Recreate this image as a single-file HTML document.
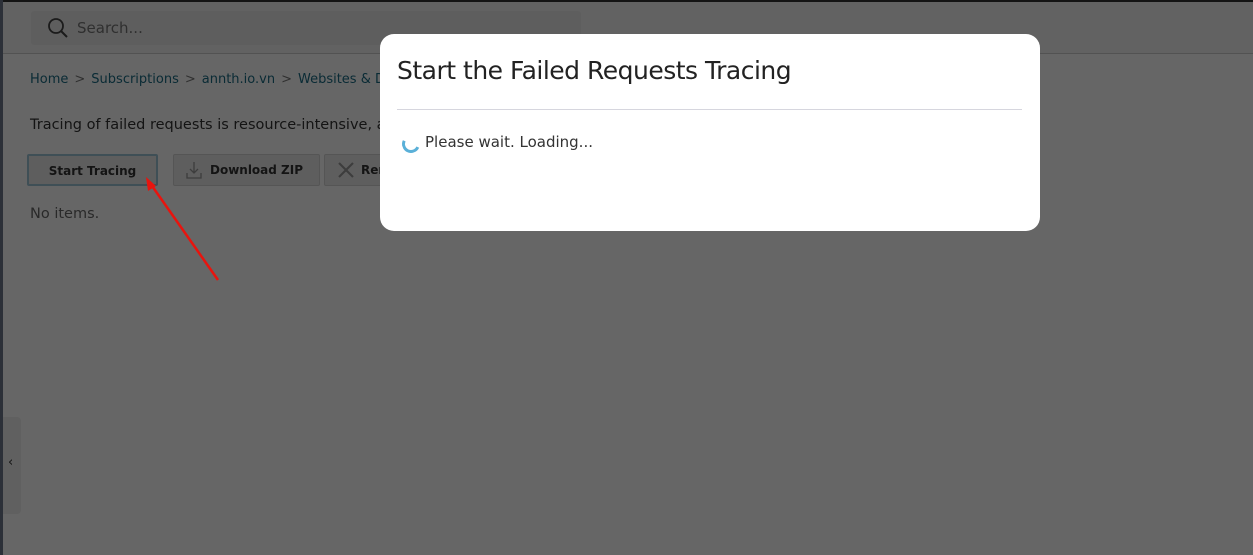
<!DOCTYPE html>
<html><head><style>
*{box-sizing:border-box;margin:0;padding:0}
body{width:1253px;height:555px;overflow:hidden;position:relative;background:#fff;font-family:"DejaVu Sans","Liberation Sans",sans-serif;color:#222}
.top{position:absolute;left:0;top:0;width:1253px;height:2px;background:#333}
.lstrip{position:absolute;left:0;top:0;width:3px;height:555px;background:#2c3038}
.hdr{position:absolute;left:3px;top:2px;right:0;height:52px;background:#f4f4f4;border-bottom:1px solid #ccc}
.search{position:absolute;left:28px;top:9px;width:550px;height:34px;background:#ececec;border-radius:3px;font-size:15px;color:#777;padding:8px 0 0 46px}
.search svg{position:absolute;left:16px;top:6px}
.bc{position:absolute;left:30px;top:72px;font-size:13px;color:#1b6d85}
.bc span{color:#777;margin:0 6px}
.desc{position:absolute;left:30px;top:117px;font-size:14.5px;color:#333;white-space:nowrap}
.btn{position:absolute;top:154px;height:32px;background:#eaeaea;border:1px solid #d4d4d4;border-radius:2px;font-size:12px;font-weight:bold;color:#333;padding-top:8px;text-align:center}
.noit{position:absolute;left:30px;top:206px;font-size:14.5px;color:#666}
.tab{position:absolute;left:3px;top:417px;width:18px;height:97px;background:#f0f0f0;border-radius:0 4px 4px 0;font-size:13px;color:#333;padding:38px 0 0 5px}
.ov{position:absolute;left:0;top:0;width:1253px;height:555px;background:rgba(0,0,0,0.6)}
.modal{position:absolute;left:380px;top:34px;width:660px;height:197px;background:#fff;border-radius:14px}
.modal h1{position:absolute;left:17px;top:22px;font-weight:normal;font-size:25px;color:#222;white-space:nowrap;letter-spacing:-0.5px}
.modal hr{position:absolute;left:17px;top:75px;width:625px;border:0;border-top:1px solid #d6d6de}
.load{position:absolute;left:45px;top:99px;font-size:15px;color:#333}
.spin{position:absolute;left:22px;top:101px;width:18px;height:18px;border-radius:50%;border:3px solid transparent;border-left-color:#5ab0d8;border-bottom-color:#5ab0d8;transform:rotate(-20deg)}
</style></head><body>
<div class="hdr"><div class="search"><svg width="22" height="22" viewBox="0 0 22 22"><circle cx="9" cy="9" r="7" fill="none" stroke="#444" stroke-width="1.8"/><path d="M14 14l6 6" stroke="#444" stroke-width="2"/></svg>Search...</div></div>
<div class="top"></div>
<div class="bc">Home<span>&gt;</span>Subscriptions<span>&gt;</span>annth.io.vn<span>&gt;</span>Websites &amp; Domains</div>
<div class="desc">Tracing of failed requests is resource-intensive, and it should be turned on only when you need to find out why errors are produced.</div>
<div class="btn" style="left:27px;width:131px;border:2px solid #9fc6d8">Start Tracing</div>
<div class="btn" style="left:173px;width:147px;padding-left:20px"><svg style="position:absolute;left:12px;top:6px" width="16" height="18" viewBox="0 0 16 18"><path d="M8 1v11M4 8l4 4 4-4M1 12v5h14v-5" fill="none" stroke="#999" stroke-width="1.3"/></svg>Download ZIP</div>
<div class="btn" style="left:324px;width:120px;padding-left:36px;text-align:left"><svg style="position:absolute;left:13px;top:7px" width="16" height="16" viewBox="0 0 16 16"><path d="M1 1l14 14M15 1L1 15" stroke="#999" stroke-width="2.2"/></svg>Remove</div>
<div class="noit">No items.</div>
<div class="tab">‹</div>
<div class="ov"></div>
<div class="lstrip"></div>
<svg style="position:absolute;left:0;top:0" width="1253" height="555"><path d="M218 280L150 183" stroke="#e8140e" stroke-width="2.5"/><path d="M146 177l2 14 8-5z" fill="#e8140e"/></svg>
<div class="modal"><h1>Start the Failed Requests Tracing</h1><hr><div class="spin"></div><div class="load">Please wait. Loading...</div></div>
</body></html>
